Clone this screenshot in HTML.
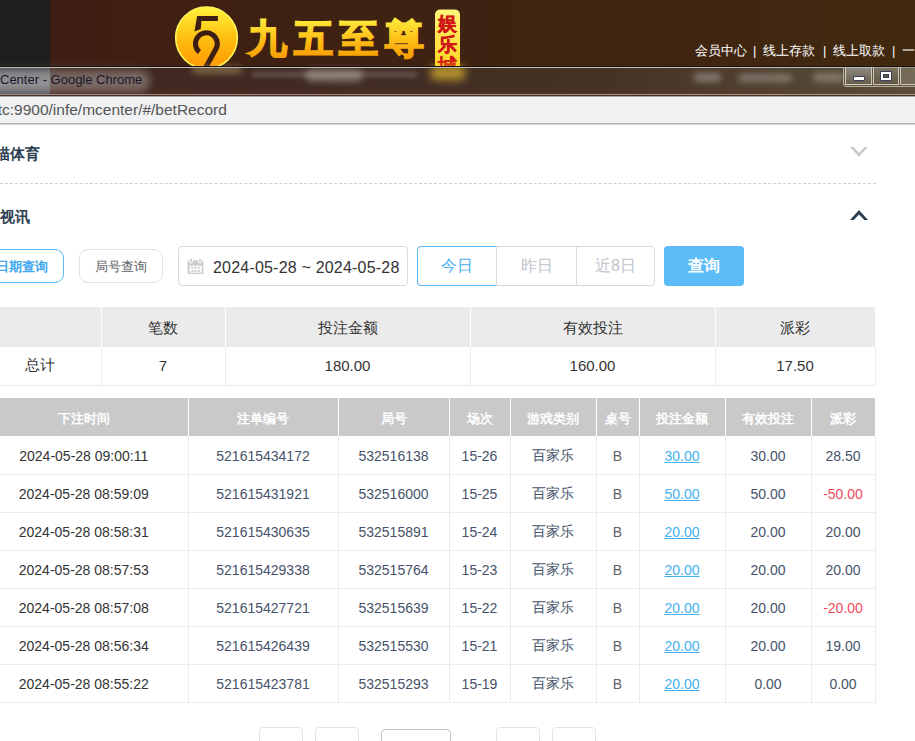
<!DOCTYPE html>
<html><head><meta charset="utf-8">
<style>
*{box-sizing:border-box;margin:0;padding:0}
html,body{width:915px;height:741px;overflow:hidden;background:#fff;font-family:"Liberation Sans",sans-serif;position:relative}
.abs{position:absolute}
#hdr{left:0;top:0;width:915px;height:96px;background:linear-gradient(90deg,#3e1e13 0px,#3f2212 400px,#41290f 915px)}
#hdrdark{left:0;top:0;width:50px;height:96px;background:#1f1f1f}
#band{left:0;top:66px;width:915px;height:30px}
#addr{left:0;top:97px;width:915px;height:26px;background:#f1f2f4}
#addrline{left:0;top:123px;width:915px;height:2px;background:linear-gradient(180deg,#b0b0b0 50%,#d8d8d8 50%)}
.nav{top:43px;color:#fff;font-size:13px;line-height:16px;white-space:nowrap}
.h2{font-size:14px;font-weight:bold;color:#2c3e50;line-height:20px;white-space:nowrap}
.btn{border:1px solid #e2e2e2;border-radius:9px;font-size:13px;line-height:34px;text-align:center;color:#606266}
table{border-collapse:collapse;position:absolute;table-layout:fixed}
td,th{text-align:center;white-space:nowrap;overflow:hidden}
#sum{left:-20px;top:307px;width:895px}
#sum th{background:#ebebeb;height:40px;font-weight:normal;font-size:15px;color:#333;border-left:1px solid #fff;padding-top:2px}
#sum td{height:38px;font-size:15px;color:#333;border-left:1px solid #ebebeb;border-bottom:1px solid #ebebeb}
#sum th:first-child,#sum td:first-child{border-left:none}
#sum tr:first-child th:last-child{}
#det{left:-20px;top:398px;width:895px}
#det th{background:#c9c9c9;height:38px;font-size:13px;color:#fff;font-weight:bold;border-left:1px solid #fff;padding-top:4px}
#det td{height:38px;padding-top:2px;font-size:14px;color:#46526a;border-left:1px solid #ebebeb;border-bottom:1px solid #ebebeb}
#det th:first-child,#det td:first-child{border-left:none}
#det td:first-child{color:#333}
#det td.lnk{color:#45b0f0;text-decoration:underline}
#det td.neg{color:#f04a5a}
#det td:last-child,#sum td:last-child{border-right:1px solid #ebebeb}
.pg{top:727px;height:30px;border:1px solid #e4e4e4;border-radius:4px}
</style></head><body>
<div id="hdr" class="abs"></div>
<div id="hdrdark" class="abs"></div>
<!-- logo -->
<svg class="abs" style="left:170px;top:0" width="300" height="70" viewBox="0 0 300 70">
<defs>
<linearGradient id="gc" x1="0" y1="0" x2="0" y2="1"><stop offset="0" stop-color="#fff23a"/><stop offset="0.45" stop-color="#ffc414"/><stop offset="1" stop-color="#ff9600"/></linearGradient>
<linearGradient id="gt" x1="0" y1="0" x2="0" y2="1"><stop offset="0" stop-color="#fff040"/><stop offset="0.5" stop-color="#ffc21a"/><stop offset="1" stop-color="#f59a00"/></linearGradient>
<linearGradient id="gb" x1="0" y1="0" x2="0" y2="1"><stop offset="0" stop-color="#fff57a"/><stop offset="1" stop-color="#ffd21a"/></linearGradient>
</defs>
<circle cx="36.5" cy="37.8" r="30.8" fill="url(#gc)" stroke="#fff45a" stroke-width="1.6"/>
<polygon points="27.1,16 47.9,16 47.9,21 31.4,21 30.8,29 24.4,31.6" fill="#3e1e13"/>
<path d="M29.4 52.05 A10.9 10.9 0 1 1 45.87 49.1 L35.4 68" fill="none" stroke="#3e1e13" stroke-width="5.1"/>
<text x="78" y="51.5" font-family="Liberation Sans" font-weight="bold" font-size="39" fill="url(#gt)" stroke="url(#gt)" stroke-width="1.6" textLength="176" lengthAdjust="spacing">九五至尊</text>
<rect x="265" y="9.5" width="25" height="62" rx="5" fill="url(#gb)"/>
<text x="277.5" y="29.5" font-family="Liberation Serif" font-weight="bold" font-size="18.5" fill="#cf1515" stroke="#cf1515" stroke-width="0.4" text-anchor="middle">娱</text>
<text x="277.5" y="50.5" font-family="Liberation Serif" font-weight="bold" font-size="18.5" fill="#cf1515" stroke="#cf1515" stroke-width="0.4" text-anchor="middle">乐</text>
<text x="277.5" y="71.5" font-family="Liberation Serif" font-weight="bold" font-size="18.5" fill="#cf1515" stroke="#cf1515" stroke-width="0.4" text-anchor="middle">城</text>
</svg>
<!-- nav -->
<div class="abs nav" style="left:695px">会员中心</div>
<div class="abs nav" style="left:753px">|</div>
<div class="abs nav" style="left:763px">线上存款</div>
<div class="abs nav" style="left:823px">|</div>
<div class="abs nav" style="left:833px">线上取款</div>
<div class="abs nav" style="left:892px">|</div>
<div class="abs nav" style="left:902px">一</div>

<!-- title band -->
<div class="abs" style="left:0;top:66px;width:915px;height:30px;background:linear-gradient(180deg,rgba(0,0,0,0) 70%,rgba(120,50,30,0.25) 100%),linear-gradient(90deg,#41281f 0,#402a23 300px,#453225 600px,#5a4f3c 915px)"></div>
<div class="abs" style="left:0;top:66px;width:50px;height:30px;background:linear-gradient(180deg,#3e4145,#5c5f63 25%,#666a6e 60%,#4a4d51)"></div>
<div class="abs" style="left:-30px;top:70px;width:180px;height:22px;border-radius:11px;background:rgba(215,210,210,0.38);filter:blur(4px)"></div>
<div class="abs" style="left:252px;top:72px;width:165px;height:5px;border-radius:3px;background:rgba(255,255,255,0.2);filter:blur(2.5px)"></div>
<div class="abs" style="left:305px;top:69px;width:58px;height:13px;border-radius:7px;background:rgba(230,230,215,0.35);filter:blur(3px)"></div>
<div class="abs" style="left:192px;top:66px;width:50px;height:8px;border-radius:4px;background:rgba(255,240,150,0.3);filter:blur(3px)"></div>
<div class="abs" style="left:430px;top:66px;width:36px;height:14px;border-radius:7px;background:rgba(255,215,50,0.6);filter:blur(4px)"></div>
<div class="abs" style="left:694px;top:73px;width:27px;height:9px;border-radius:4px;background:rgba(255,255,255,0.3);filter:blur(3px)"></div>
<div class="abs" style="left:738px;top:74px;width:54px;height:8px;border-radius:4px;background:rgba(255,255,255,0.28);filter:blur(3px)"></div>
<div class="abs" style="left:813px;top:73px;width:31px;height:9px;border-radius:4px;background:rgba(255,255,255,0.26);filter:blur(3px)"></div>
<div class="abs" style="left:0;top:66px;width:915px;height:1px;background:#1a1410"></div>
<div class="abs" style="left:0;top:67px;width:915px;height:1px;background:#c6bcb6"></div>
<div class="abs" style="left:0;top:94px;width:915px;height:1px;background:linear-gradient(90deg,#9a8a84,#a08880 300px,#a89a80)"></div>
<div class="abs" style="left:0;top:95px;width:915px;height:1px;background:#45302a"></div>
<div class="abs" style="left:0;top:96px;width:915px;height:1px;background:#a8a8a8"></div>
<div class="abs" style="left:0;top:72px;font-size:13px;color:#17192a;line-height:16px;white-space:nowrap">Center - Google Chrome</div>
<!-- window buttons -->
<div class="abs" style="left:843px;top:67px;width:80px;height:20px;border:1px solid rgba(230,225,210,0.6);border-top:none;border-radius:0 0 0 4px;background:rgba(120,110,90,0.35)"></div>
<div class="abs" style="left:845px;top:67px;width:27px;height:18px;border:1px solid rgba(235,230,215,0.75);border-top:none;background:linear-gradient(180deg,rgba(200,210,220,0.45),rgba(110,100,80,0.4))"></div>
<div class="abs" style="left:873px;top:67px;width:26px;height:18px;border:1px solid rgba(235,230,215,0.75);border-top:none;background:linear-gradient(180deg,rgba(160,160,150,0.4),rgba(100,90,70,0.4))"></div>
<div class="abs" style="left:900px;top:67px;width:30px;height:18px;border:1px solid rgba(235,230,215,0.75);border-top:none;background:rgba(140,135,115,0.4)"></div>
<div class="abs" style="left:853px;top:76px;width:12px;height:5px;background:#fff;border:1px solid #3a3f5c;border-radius:1px"></div>
<div class="abs" style="left:880px;top:71px;width:12px;height:10px;background:#fff;border:1px solid #3a3f5c;border-radius:1px"></div>
<div class="abs" style="left:883px;top:74px;width:6px;height:4px;background:#5a5a4a;border:1px solid #3a3f5c"></div>

<div id="addr" class="abs"></div>
<div id="addrline" class="abs"></div>
<div class="abs" style="left:-2.3px;top:100px;font-size:15.5px;color:#555;line-height:20px;white-space:nowrap">tc:9900/infe/mcenter/#/betRecord</div>

<!-- sections -->
<div class="abs h2" style="left:-5px;top:144px;font-size:14.8px">描体育</div>
<div class="abs" style="left:-20px;top:183px;width:896px;height:1px;border-top:1px dashed #cfcfcf"></div>
<div class="abs h2" style="left:0px;top:206.5px;font-size:14.8px">视讯</div>
<svg class="abs" style="left:846px;top:143px" width="26" height="18" viewBox="0 0 26 18"><path d="M4 4 L7.3 4 L13 9.7 L18.7 4 L22 4 L13 13.8 Z" fill="#c9c9c9"/></svg>
<svg class="abs" style="left:846px;top:206px" width="26" height="18" viewBox="0 0 26 18"><path d="M4 14 L13 4 L22 14 L18.3 14 L13 8.4 L7.7 14 Z" fill="#2c3e50"/></svg>

<div class="abs btn" style="left:-20px;top:249px;width:84px;height:34px;border-color:#5ab8f5;color:#40a8ee;font-weight:bold">日期查询</div>
<div class="abs btn" style="left:79px;top:249px;width:84px;height:34px">局号查询</div>
<div class="abs" style="left:178px;top:246px;width:230px;height:40px;border:1px solid #dadada;border-radius:4px"></div>
<div class="abs" style="left:213px;top:258px;font-size:16px;letter-spacing:0.2px;color:#333;line-height:20px;white-space:nowrap">2024-05-28 ~ 2024-05-28</div>
<svg class="abs" style="left:184px;top:255px" width="24" height="24" viewBox="0 0 24 24">
<rect x="3.6" y="5.3" width="15.8" height="13.8" rx="1" fill="#cdcdcd"/>
<rect x="5.7" y="10.7" width="12" height="7" fill="#fff"/>
<rect x="5.2" y="3.4" width="3.6" height="4.8" rx="1.6" fill="#fff"/>
<rect x="14.1" y="3.4" width="3.6" height="4.8" rx="1.6" fill="#fff"/>
<rect x="6.1" y="3.6" width="1.8" height="3.6" rx="0.9" fill="#cdcdcd"/>
<rect x="15" y="3.6" width="1.8" height="3.6" rx="0.9" fill="#cdcdcd"/>
<g fill="#cdcdcd"><rect x="7.3" y="11.8" width="2" height="2"/><rect x="10.3" y="11.8" width="2" height="2"/><rect x="13.7" y="11.8" width="2" height="2"/><rect x="7.3" y="15" width="2" height="2"/><rect x="10.3" y="15" width="2" height="2"/><rect x="13.7" y="15" width="2" height="2"/></g>
</svg>
<div class="abs" style="left:417px;top:246px;width:238px;height:40px;border:1px solid #dadada;border-radius:4px"></div>
<div class="abs" style="left:417px;top:246px;width:80px;height:40px;border:1px solid #5ab8f5;border-radius:4px 0 0 4px;color:#45b0f0;font-size:16px;line-height:38px;text-align:center">今日</div>
<div class="abs" style="left:496px;top:246px;width:1px;height:40px;background:#dadada"></div>
<div class="abs" style="left:497px;top:247px;width:79px;height:38px;color:#c0c4cc;font-size:16px;line-height:38px;text-align:center">昨日</div>
<div class="abs" style="left:576px;top:246px;width:1px;height:40px;background:#dadada"></div>
<div class="abs" style="left:576px;top:247px;width:79px;height:38px;color:#c0c4cc;font-size:16px;line-height:38px;text-align:center">近8日</div>
<div class="abs" style="left:664px;top:246px;width:80px;height:40px;background:#5bbcf8;border-radius:4px;color:#fff;font-size:16px;font-weight:bold;line-height:40px;text-align:center">查询</div>

<table id="sum">
<colgroup><col style="width:121px"><col style="width:124px"><col style="width:245px"><col style="width:245px"><col style="width:160px"></colgroup>
<tr><th></th><th>笔数</th><th>投注金额</th><th>有效投注</th><th>派彩</th></tr>
<tr><td>总计</td><td>7</td><td>180.00</td><td>160.00</td><td>17.50</td></tr>
</table>

<table id="det">
<colgroup><col style="width:208px"><col style="width:150px"><col style="width:111px"><col style="width:61px"><col style="width:86px"><col style="width:43px"><col style="width:86px"><col style="width:86px"><col style="width:64px"></colgroup>
<tr><th>下注时间</th><th>注单编号</th><th>局号</th><th>场次</th><th>游戏类别</th><th>桌号</th><th>投注金额</th><th>有效投注</th><th>派彩</th></tr>
<tr><td>2024-05-28 09:00:11</td><td>521615434172</td><td>532516138</td><td>15-26</td><td>百家乐</td><td style="color:#5f6266">B</td><td class="lnk">30.00</td><td>30.00</td><td>28.50</td></tr>
<tr><td>2024-05-28 08:59:09</td><td>521615431921</td><td>532516000</td><td>15-25</td><td>百家乐</td><td style="color:#5f6266">B</td><td class="lnk">50.00</td><td>50.00</td><td class="neg">-50.00</td></tr>
<tr><td>2024-05-28 08:58:31</td><td>521615430635</td><td>532515891</td><td>15-24</td><td>百家乐</td><td style="color:#5f6266">B</td><td class="lnk">20.00</td><td>20.00</td><td>20.00</td></tr>
<tr><td>2024-05-28 08:57:53</td><td>521615429338</td><td>532515764</td><td>15-23</td><td>百家乐</td><td style="color:#5f6266">B</td><td class="lnk">20.00</td><td>20.00</td><td>20.00</td></tr>
<tr><td>2024-05-28 08:57:08</td><td>521615427721</td><td>532515639</td><td>15-22</td><td>百家乐</td><td style="color:#5f6266">B</td><td class="lnk">20.00</td><td>20.00</td><td class="neg">-20.00</td></tr>
<tr><td>2024-05-28 08:56:34</td><td>521615426439</td><td>532515530</td><td>15-21</td><td>百家乐</td><td style="color:#5f6266">B</td><td class="lnk">20.00</td><td>20.00</td><td>19.00</td></tr>
<tr><td>2024-05-28 08:55:22</td><td>521615423781</td><td>532515293</td><td>15-19</td><td>百家乐</td><td style="color:#5f6266">B</td><td class="lnk">20.00</td><td>0.00</td><td>0.00</td></tr>
</table>

<div class="abs pg" style="left:259px;width:44px"></div>
<div class="abs pg" style="left:315px;width:44px"></div>
<div class="abs pg" style="left:381px;top:729px;width:70px;border-color:#c4c4c4"></div>
<div class="abs pg" style="left:496px;width:44px"></div>
<div class="abs pg" style="left:552px;width:44px"></div>
</body></html>
